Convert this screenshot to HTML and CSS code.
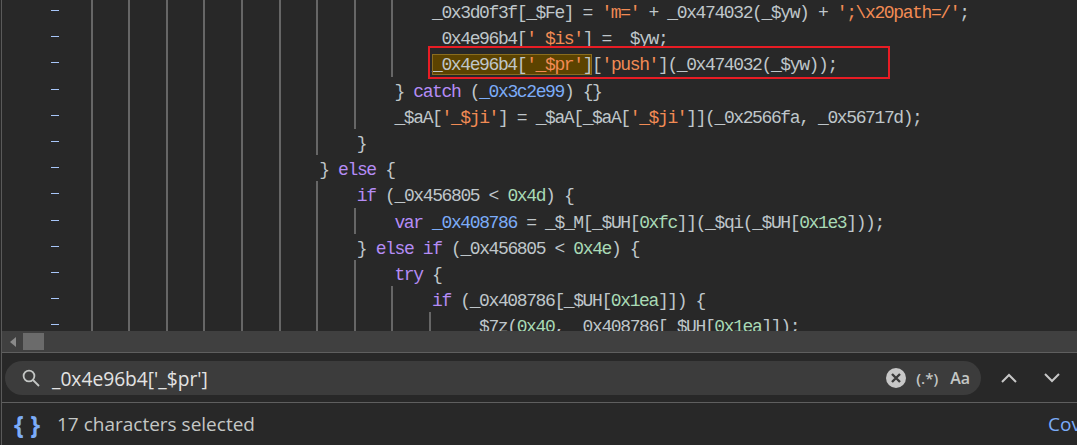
FILE: index.html
```html
<!DOCTYPE html>
<html lang="en">
<head>
<meta charset="utf-8">
<title>Sources</title>
<link rel="stylesheet" href="styles.css">
</head>
<body>
<div class="app">
  <div class="code">
    <div class="lines">
      <div class="row"><i class="dash"></i><b class="g"></b><b class="g"></b><b class="g"></b><b class="g"></b><b class="g"></b><b class="g"></b><b class="g"></b><b class="g"></b><b class="g"></b><span class="src">_0x3d0f3f[_$Fe] = <em class="s">'m='</em> + _0x474032(_$yw) + <em class="s">';\x20path=/'</em>;</span></div>
      <div class="row"><i class="dash"></i><b class="g"></b><b class="g"></b><b class="g"></b><b class="g"></b><b class="g"></b><b class="g"></b><b class="g"></b><b class="g"></b><b class="g"></b><span class="src"><u class="hid">_</u>0x4e96b4[<em class="s">'<u class="hid">_</u>$is'</em>] = <u class="hid">_</u>$yw;</span></div>
      <div class="row"><i class="dash"></i><b class="g"></b><b class="g"></b><b class="g"></b><b class="g"></b><b class="g"></b><b class="g"></b><b class="g"></b><b class="g"></b><b class="g"></b><span class="src"><mark class="hit">_0x4e96b4[<em class="s">'_$pr'</em>]</mark>[<em class="s">'push'</em>](_0x474032(_$yw));</span></div>
      <div class="row"><i class="dash"></i><b class="g"></b><b class="g"></b><b class="g"></b><b class="g"></b><b class="g"></b><b class="g"></b><b class="g"></b><b class="g"></b><span class="src">} <em class="k">catch</em> (<em class="d">_0x3c2e99</em>) {}</span></div>
      <div class="row"><i class="dash"></i><b class="g"></b><b class="g"></b><b class="g"></b><b class="g"></b><b class="g"></b><b class="g"></b><b class="g"></b><b class="g"></b><span class="src">_$aA[<em class="s">'_$ji'</em>] = _$aA[_$aA[<em class="s">'_$ji'</em>]](_0x2566fa, _0x56717d);</span></div>
      <div class="row"><i class="dash"></i><b class="g"></b><b class="g"></b><b class="g"></b><b class="g"></b><b class="g"></b><b class="g"></b><b class="g"></b><span class="src">}</span></div>
      <div class="row"><i class="dash"></i><b class="g"></b><b class="g"></b><b class="g"></b><b class="g"></b><b class="g"></b><b class="g"></b><span class="src">} <em class="k">else</em> {</span></div>
      <div class="row"><i class="dash"></i><b class="g"></b><b class="g"></b><b class="g"></b><b class="g"></b><b class="g"></b><b class="g"></b><b class="g"></b><span class="src"><em class="k">if</em> (_0x456805 &lt; <em class="n">0x4d</em>) {</span></div>
      <div class="row"><i class="dash"></i><b class="g"></b><b class="g"></b><b class="g"></b><b class="g"></b><b class="g"></b><b class="g"></b><b class="g"></b><b class="g"></b><span class="src"><em class="k">var</em> <em class="d">_0x408786</em> = _$_M[_$UH[<em class="n">0xfc</em>]](_$qi(_$UH[<em class="n">0x1e3</em>]));</span></div>
      <div class="row"><i class="dash"></i><b class="g"></b><b class="g"></b><b class="g"></b><b class="g"></b><b class="g"></b><b class="g"></b><b class="g"></b><span class="src">} <em class="k">else if</em> (_0x456805 &lt; <em class="n">0x4e</em>) {</span></div>
      <div class="row"><i class="dash"></i><b class="g"></b><b class="g"></b><b class="g"></b><b class="g"></b><b class="g"></b><b class="g"></b><b class="g"></b><b class="g"></b><span class="src"><em class="k">try</em> {</span></div>
      <div class="row"><i class="dash"></i><b class="g"></b><b class="g"></b><b class="g"></b><b class="g"></b><b class="g"></b><b class="g"></b><b class="g"></b><b class="g"></b><b class="g"></b><span class="src"><em class="k">if</em> (_0x408786[_$UH[<em class="n">0x1ea</em>]]) {</span></div>
      <div class="row"><i class="dash"></i><b class="g"></b><b class="g"></b><b class="g"></b><b class="g"></b><b class="g"></b><b class="g"></b><b class="g"></b><b class="g"></b><b class="g"></b><b class="g"></b><span class="src">_$7z(<em class="n">0x40</em>, _0x408786[_$UH[<em class="n">0x1ea</em>]]);</span></div>
    </div>
    <div class="callout"></div>
  </div>
  <div class="hscroll">
    <svg class="arrow" width="6" height="10" viewBox="0 0 6 10"><path d="M6 0v10L0 5z"/></svg>
    <div class="thumb"></div>
  </div>
  <div class="search">
    <div class="pill">
      <svg class="glass" width="18" height="18" viewBox="0 0 18 18"><circle cx="7" cy="7" r="5.4"/><path d="M11 11l6 6"/></svg>
      <span class="query">_0x4e96b4['_$pr']</span>
      <svg class="clear" width="20" height="20" viewBox="0 0 20 20"><circle cx="10" cy="10" r="10"/><path d="M6 6l8 8M14 6l-8 8"/></svg>
      <span class="opt regex">(.*)</span>
      <span class="opt case">Aa</span>
    </div>
    <svg class="chev up" width="16" height="10" viewBox="0 0 16 10"><path d="M1 9l7-7 7 7"/></svg>
    <svg class="chev down" width="16" height="10" viewBox="0 0 16 10"><path d="M1 1l7 7 7-7"/></svg>
  </div>
  <div class="status">
    <span class="braces">{ }</span>
    <span class="sel">17 characters selected</span>
    <span class="cov">Cov</span>
  </div>
</div>
</body>
</html>
```

FILE: styles.css
```css
html, body {
  margin: 0;
  height: 100%;
  overflow: hidden;
  background: #282828;
}
.app {
  width: 1076px;
  height: 445px;
  margin-left: 1px;
  border-left: 1px solid #5a5a5a;
  display: flex;
  flex-direction: column;
  overflow: hidden;
  box-sizing: content-box;
}
.code {
  position: relative;
  height: 331px;
  flex: none;
  overflow: hidden;
  background: #282828;
}
.lines {
  margin-top: -2px;
  font-family: "Liberation Mono", monospace;
  font-size: 18px;
  letter-spacing: -1.39px;
  color: #bfc6ca;
}
.row {
  height: 26.2px;
  display: flex;
  align-items: stretch;
  white-space: pre;
}
.dash {
  flex: none;
  width: 8px;
  height: 1px;
  margin: 12px 31.7px 0 49px;
  background: #a8c7fa;
}
.g {
  flex: none;
  width: 37.6px;
  box-sizing: border-box;
  border-left: 2px solid #666666;
}
.src {
  padding: 2px 0 0 3px;
  line-height: 26.2px;
}
em {
  font-style: normal;
}
.s { color: #f28b54; }
.k { color: #b58cf5; }
.d { color: #7cacf8; }
.n { color: #a8dab5; }
u.hid {
  text-decoration: none;
  color: transparent;
}
.hit {
  display: inline-block;
  height: 21px;
  line-height: 23px;
  box-sizing: border-box;
  color: inherit;
  background: #5c4300;
  outline: 1px solid #8a6d1f;
  outline-offset: -1px;
}
.callout {
  position: absolute;
  left: 426px;
  top: 46px;
  width: 462px;
  height: 33px;
  box-sizing: border-box;
  border: 2px solid #e81c24;
}
.hscroll {
  flex: none;
  height: 21px;
  background: #404040;
  border-bottom: 1px solid #5f5f5f;
  display: flex;
  align-items: center;
}
.arrow {
  margin-left: 8px;
  fill: #8a8a8a;
}
.thumb {
  width: 21px;
  height: 17px;
  margin-left: 7px;
  background: #6b6b6b;
}
.search {
  flex: none;
  height: 50px;
  box-sizing: border-box;
  border-bottom: 1px solid #5f5f5f;
  display: flex;
  align-items: center;
  padding-left: 3px;
}
.pill {
  width: 976px;
  height: 34px;
  border-radius: 17px;
  background: #3c3c3c;
  display: flex;
  align-items: center;
  padding-left: 17px;
  box-sizing: border-box;
  font-family: "Open Sans", sans-serif;
}
.glass {
  fill: none;
  stroke: #c4c7c5;
  stroke-width: 1.8;
}
.query {
  margin-left: 12px;
  flex: 1;
  font-size: 19.2px;
  color: #e3e3e3;
  white-space: pre;
  padding-top: 1px;
}
.clear {
  fill: #c7c7c7;
}
.clear path {
  stroke: #3c3c3c;
  stroke-width: 2.4;
  fill: none;
}
.opt {
  color: #c4c7c5;
  font-weight: 600;
}
.regex { margin-left: 10px; font-size: 15px; }
.case { margin-left: 12px; margin-right: 11px; font-size: 16px; }
.chev {
  fill: none;
  stroke: #c7c7c7;
  stroke-width: 2;
}
.up { margin-left: 20px; }
.down { margin-left: 27px; }
.status {
  flex: 1;
  display: flex;
  align-items: center;
  padding-left: 12px;
  font-family: "Open Sans", sans-serif;
  font-size: 19px;
  white-space: nowrap;
}
.braces {
  color: #7cacf8;
  font-weight: 700;
  font-size: 25px;
  line-height: 30px;
  width: 43px;
  flex: none;
}
.sel {
  color: #c4c7c5;
  flex: none;
  width: 991px;
}
.cov {
  color: #7cacf8;
  flex: none;
}
```
